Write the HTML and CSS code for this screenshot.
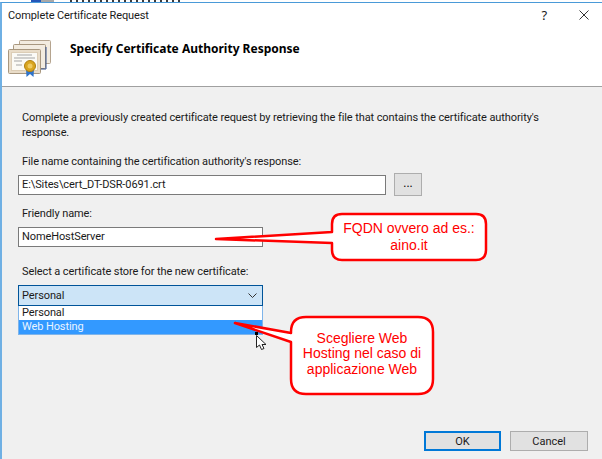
FILE: index.html
```html
<!DOCTYPE html>
<html lang="en">
<head>
    <meta charset="UTF-8">
    <title>Complete Certificate Request</title>
    <link rel="stylesheet" href="styles.css">
</head>
<body>

<div class="behind"></div>

<div class="dialog">
    <div class="title-bar">
        <span class="title-text">Complete Certificate Request</span>
        <span class="help-btn">?</span>
        <svg class="close-btn" width="10" height="10" viewBox="0 0 10 10">
            <path d="M0.5 0.5L9.5 9.5M9.5 0.5L0.5 9.5" stroke="#333" stroke-width="1" fill="none"/>
        </svg>
    </div>

    <div class="header">
        <svg class="cert-icon" width="44" height="40" viewBox="0 0 44 40">
            <rect x="11.5" y="1.5" width="31" height="23" rx="1" fill="#f3ece0" stroke="#b5a48f"/>
            <rect x="5.5" y="5.5" width="32" height="24" rx="1" fill="#f3ece0" stroke="#a8977f"/>
            <path d="M38 8V30H20" stroke="#34508c" fill="none"/>
            <rect x="0.5" y="10.5" width="32" height="24" rx="1" fill="#e9dcc8" stroke="#a8977f"/>
            <rect x="3.5" y="13.5" width="26" height="18" fill="#fbfaf6" stroke="#dccdb6"/>
            <path d="M9 16H24M6 19H27M6 22H14M8 26H14" stroke="#a5a5a5" fill="none"/>
            <path d="M18 30L18.500 38L22 35L25.500 38L26 30Z" fill="#2f73c9"/>
            <circle cx="22" cy="27" r="5.500" fill="#d9a520" stroke="#b07f10"/>
            <circle cx="22" cy="27" r="2.500" fill="#efcb62"/>
        </svg>
        <h2>Specify Certificate Authority Response</h2>
    </div>

    <form class="content">
        <p class="intro">Complete a previously created certificate request by retrieving the file that contains the certificate authority's response.</p>

        <label class="file-label">File name containing the certification authority's response:</label>
        <div class="file-row">
            <div class="text-box file-box">E:\Sites\cert_DT-DSR-0691.crt</div>
            <button type="button" class="browse-btn">...</button>
        </div>

        <label class="name-label">Friendly name:</label>
        <div class="text-box name-box">NomeHostServer</div>

        <label class="store-label">Select a certificate store for the new certificate:</label>
        <div class="store-select">
            <span>Personal</span>
            <svg width="9" height="5" viewBox="0 0 9 5">
                <path d="M0.5 0.5L4.5 4.5L8.5 0.5" stroke="#333" fill="none"/>
            </svg>
        </div>
        <ul class="store-list">
            <li>Personal</li>
            <li class="selected">Web Hosting</li>
        </ul>

        <div class="buttons">
            <button type="button" class="dlg-btn default">OK</button>
            <button type="button" class="dlg-btn">Cancel</button>
        </div>
    </form>
</div>

<!-- red notes drawn over the dialog -->
<svg class="notes" width="602" height="459" viewBox="0 0 602 459">
    <path class="note-shape" d="M342 214H476Q486 214 486 224V250Q486 260 476 260H342Q332 260 332 250V243L216 239L332 232V224Q332 214 342 214Z"/>
    <text class="note-text" x="409" y="233">FQDN ovvero ad es.:</text>
    <text class="note-text" x="409" y="250">aino.it</text>

    <path class="note-shape" d="M306 317H418Q433 317 433 332V379Q433 394 418 394H306Q291 394 291 379V342L235 323L291 333V332Q291 317 306 317Z"/>
    <text class="note-text" x="362" y="343">Scegliere Web</text>
    <text class="note-text" x="362" y="358">Hosting nel caso di</text>
    <text class="note-text" x="362" y="374">applicazione Web</text>

    <rect x="255" y="332" width="3" height="3" fill="#000"/>
    <path d="M256.500 335.500V347.500L259.500 345L261.500 349.500L264 348.500L262 344.500H266Z" fill="#fff" stroke="#222"/>
</svg>

</body>
</html>
```

FILE: styles.css
```css
* {
    box-sizing: border-box;
}

html, body {
    margin: 0;
    padding: 0;
}

body {
    width: 602px;
    height: 459px;
    overflow: hidden;
    background: #fff;
    font-family: Roboto, "Noto Sans", sans-serif;
    font-size: 11px;
    letter-spacing: -0.1px;
    color: #1a1a1a;
}

/* bottom edge of the window behind the dialog */
.behind {
    height: 2px;
    background:
        linear-gradient(90deg, #2456b8, #2456b8) 31px 0 / 10px 2px no-repeat,
        linear-gradient(90deg, #a8a8a8, #a8a8a8) 41px 0 / 13px 2px no-repeat,
        repeating-linear-gradient(90deg, #3a3a3a 0 2px, transparent 2px 6px) 70px 0 / 113px 2px no-repeat,
        #fff;
}

.dialog {
    height: 457px;
    border-top: 1px solid #4a9ad8;
    border-left: 2px solid #6fb0e4;
    background: #f0f0f0;
    display: flex;
    flex-direction: column;
}

.title-bar {
    height: 24px;
    padding: 0 6px 0 6px;
    background: #fff;
    display: flex;
    align-items: center;
}

.title-text {
    flex: 1;
}

.help-btn {
    font-family: "Noto Sans", sans-serif;
    font-size: 13px;
    margin-right: 32px;
}

.close-btn {
    margin-right: 7px;
}

.header {
    height: 60px;
    background: #fff;
    border-bottom: 1px solid #a0a0a0;
    padding: 12px 0 0 6px;
    display: flex;
    align-items: flex-start;
}

.cert-icon {
    overflow: visible;
}

h2 {
    margin: 1px 0 0 18px;
    font-family: "Noto Sans", sans-serif;
    font-size: 12px;
    font-weight: bold;
    letter-spacing: 0;
    color: #000;
}

.content {
    flex: 1;
    padding: 0 14px 8px 16px;
    display: flex;
    flex-direction: column;
    align-items: flex-start;
}

.intro {
    margin: 23px 0 0 4px;
    width: 530px;
    line-height: 15px;
}

label {
    display: block;
    margin-left: 4px;
    line-height: 15px;
}

.file-label {
    margin-top: 14px;
}

.file-row {
    display: flex;
    margin-top: 6px;
}

.text-box {
    height: 20px;
    padding-left: 3px;
    line-height: 18px;
    background: #fff;
    border: 1px solid #7a7a7a;
}

.file-box {
    width: 368px;
}

.browse-btn {
    width: 28px;
    height: 23px;
    margin: -2px 0 0 8px;
    padding: 0 0 4px;
    background: #e1e1e1;
    border: 1px solid #adadad;
    font-family: inherit;
    font-size: 12px;
}

.name-label {
    margin-top: 10px;
}

.name-box {
    width: 245px;
    margin-top: 6px;
}

.store-label {
    margin-top: 17px;
}

.store-select {
    width: 245px;
    height: 21px;
    margin-top: 6px;
    padding: 0 5px 0 3px;
    background: #cce4f7;
    border: 1px solid #005499;
    display: flex;
    align-items: center;
    justify-content: space-between;
}

.store-list {
    width: 245px;
    height: 29px;
    margin: 0;
    padding: 0;
    list-style: none;
    background: #fff;
    border: 1px solid #7eb4ea;
    border-top: 0;
}

.store-list li {
    height: 14px;
    line-height: 14px;
    padding-left: 3px;
}

.store-list .selected {
    background: #3399ff;
    color: #eaf4ff;
}

.buttons {
    margin-top: auto;
    align-self: flex-end;
    display: flex;
    gap: 9px;
}

.dlg-btn {
    width: 78px;
    height: 20px;
    padding: 0;
    background: #e1e1e1;
    border: 1px solid #adadad;
    font-family: inherit;
    font-size: 11px;
    color: #1a1a1a;
}

.dlg-btn.default {
    width: 77px;
    border: 2px solid #0078d7;
}

.notes {
    position: absolute;
    left: 0;
    top: 0;
}

.note-shape {
    fill: #fff;
    stroke: #f00;
    stroke-width: 2.5;
    stroke-linejoin: round;
}

.note-text {
    fill: #f00;
    font-family: "Liberation Sans", Arial, sans-serif;
    font-size: 14px;
    letter-spacing: 0;
    text-anchor: middle;
}
```
